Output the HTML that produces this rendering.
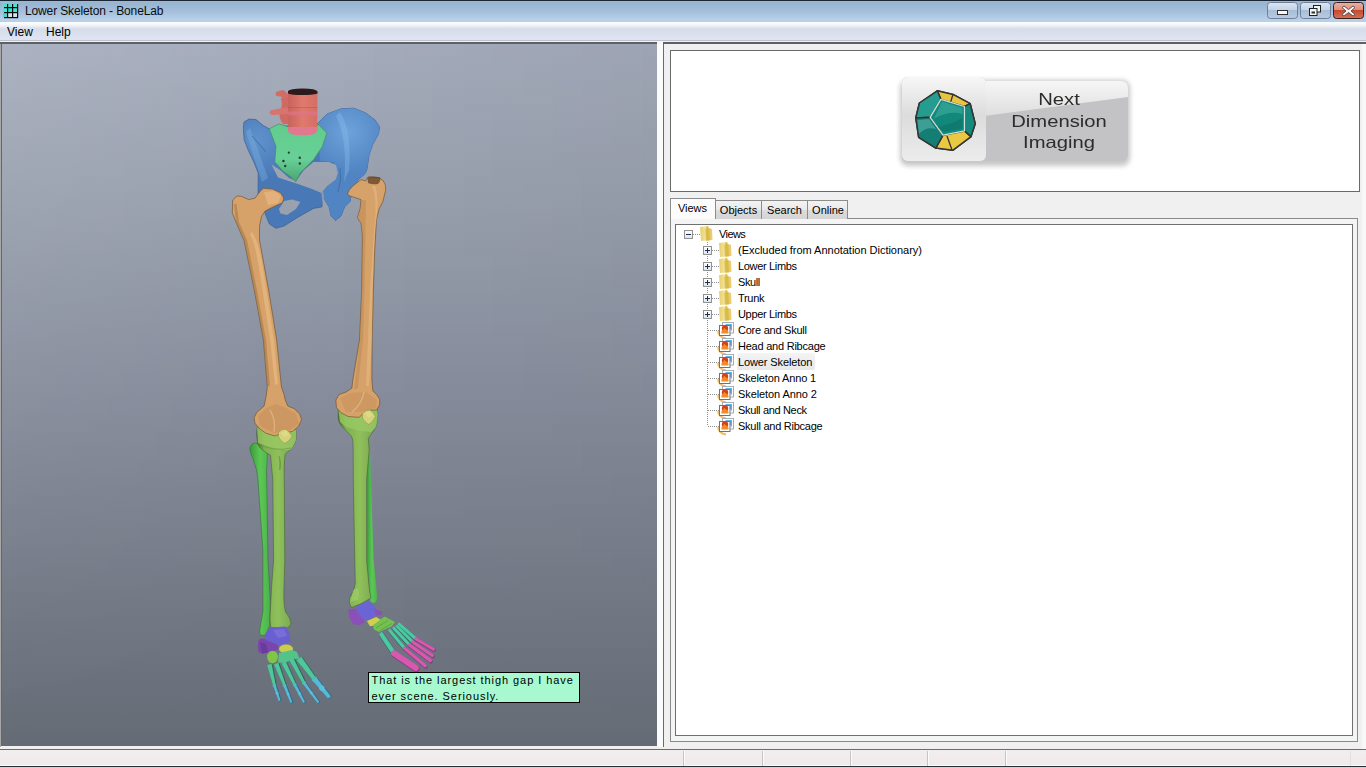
<!DOCTYPE html>
<html><head><meta charset="utf-8">
<style>
*{margin:0;padding:0;box-sizing:border-box}
html,body{width:1366px;height:768px;overflow:hidden;background:#f0f0f0;font-family:"Liberation Sans",sans-serif;font-size:12px;color:#000;position:relative}
.abs{position:absolute}
#title{left:0;top:0;width:1366px;height:22px;background:linear-gradient(#1a2535 0,#1a2535 1px,#a3b8cf 1px,#97b4d1 3px,#a6c0dc 12px,#b8d1ec 20px,#bccfe2 21px,#bccfe2 22px)}
#title .t{left:25px;top:4px;font-size:12px;line-height:14px;letter-spacing:-0.13px;color:#0c0c0c;white-space:nowrap}
#menu{left:0;top:22px;width:1366px;height:22px;background:linear-gradient(#fcfffe 0,#f3f5f8 3px,#d6dcea 7px,#dfe4f4 17px,#dfe4f4 18px,#c0c2c8 18px,#c0c2c8 19px,#f2f2f2 19px,#f2f2f2 20px,#5c6068 20px,#5c6068 22px)}
#menu span{position:absolute;top:3px;font-size:12px;color:#000}
#view3d{left:1px;top:44px;width:656px;height:702px;background:linear-gradient(#a5acbc 0%,#98a0ae 22.2%,#868c9b 50.7%,#676e78 96.3%,#646b75 100%)}
#view3dh{left:1px;top:44px;width:656px;height:702px;background:linear-gradient(to right,rgba(255,255,255,.078),rgba(255,255,255,0) 50%,rgba(0,0,0,0) 50%,rgba(0,0,0,.042));-webkit-mask-image:linear-gradient(#000,transparent);mask-image:linear-gradient(#000,transparent)}
#split{left:657px;top:44px;width:6px;height:703px;background:#fbfbfb}
#splitline{left:663px;top:44px;width:1px;height:703px;background:#6a6a6a}
#leftedge{left:0;top:44px;width:1px;height:703px;background:#a8a8a8}
#logo{left:670px;top:50px;width:690px;height:142px;background:#fff;border:1px solid #6a6a6a}
#tabpane{left:670px;top:218px;width:688px;height:524px;border:1px solid #8a8a8a;background:#f4f4f4}
#tree{left:675px;top:224px;width:678px;height:512px;border:1px solid #707070;background:#fff}
.tab{position:absolute;height:19px;border:1px solid #8c8c8c;border-bottom:none;background:linear-gradient(#f3f3f3,#e9e9e9 50%,#dcdcdc 51%,#d4d4d4);font-size:11px;line-height:13px;padding-top:3px;text-align:center}
.tab.sel{background:#fcfcfc;height:21px}
#status{left:0;top:749px;width:1366px;height:19px;background:linear-gradient(#6c6c6c 0,#6c6c6c 1px,#f2eeed 1px,#f0ebea 16px,#fafafa 16px,#fafafa 17px,#2a2f38 17px,#2a2f38 18px,#c5d3e3 18px)}
#status .sep{position:absolute;top:2px;width:1px;height:15px;background:#c8c4c2}
.node{position:absolute;font-size:11px;line-height:13px;letter-spacing:-0.2px;margin-top:1px;white-space:nowrap;color:#000}
</style></head><body>
<div id="title" class="abs"><span class="abs t">Lower Skeleton - BoneLab</span>
<svg class="abs" style="left:0;top:0" width="24" height="22" viewBox="0 0 24 22">
 <rect x="2" y="2" width="16" height="16" fill="#7fe0dc" opacity="0.35"/>
 <rect x="3" y="3" width="14" height="4" fill="#58dccf"/>
 <rect x="3" y="8" width="14" height="4" fill="#3ee6d6"/>
 <rect x="8" y="8" width="4" height="4" fill="#24e4d4"/>
 <rect x="3" y="13" width="4" height="4" fill="#50d8c4"/>
 <rect x="8" y="13" width="9" height="4" fill="#d8e4ea"/>
 <g fill="#080a0c"><rect x="7" y="4" width="1.2" height="14"/><rect x="12" y="4" width="1.2" height="14"/><rect x="17" y="4" width="1.2" height="14"/><rect x="4" y="7" width="14" height="1.2"/><rect x="4" y="12" width="14" height="1.2"/><rect x="4" y="17" width="14" height="1.2"/></g>
</svg>
<svg class="abs" style="left:1260px;top:0" width="106" height="22" viewBox="1260 0 106 22">
 <defs>
  <linearGradient id="wb" x1="0" y1="0" x2="0" y2="1"><stop offset="0" stop-color="#dbe6f2"/><stop offset="0.45" stop-color="#c4d5e8"/><stop offset="0.5" stop-color="#a9bdd6"/><stop offset="1" stop-color="#b7cbe2"/></linearGradient>
  <linearGradient id="wc" x1="0" y1="0" x2="0" y2="1"><stop offset="0" stop-color="#eab0a4"/><stop offset="0.45" stop-color="#e0907c"/><stop offset="0.5" stop-color="#c84a2c"/><stop offset="1" stop-color="#d67058"/></linearGradient>
 </defs>
 <rect x="1267.5" y="2.5" width="30" height="16" rx="3" fill="url(#wb)" stroke="#6f819a"/>
 <rect x="1300.5" y="2.5" width="30" height="16" rx="3" fill="url(#wb)" stroke="#6f819a"/>
 <rect x="1333.5" y="2.5" width="30" height="16" rx="3" fill="url(#wc)" stroke="#3a2020"/>
 <rect x="1277.5" y="10.5" width="10" height="4" fill="#f8f8f8" stroke="#303030"/>
 <rect x="1313.5" y="5.5" width="7" height="6.5" fill="#f4f4f4" stroke="#202020"/>
 <rect x="1309.5" y="8.5" width="7.5" height="7" fill="#f4f4f4" stroke="#202020"/>
 <rect x="1311.5" y="11.5" width="3.5" height="2" fill="#303030"/>
 <path d="M1344 6 L1348.5 9.5 L1353 6 L1355 7.5 L1351 11 L1355 14.5 L1353 16 L1348.5 12.5 L1344 16 L1342 14.5 L1346 11 L1342 7.5 Z" fill="#f4f4f4" stroke="#3a3a3a" stroke-width="0.8"/>
</svg>
</div>
<div id="menu" class="abs"><span style="left:7px">View</span><span style="left:46px">Help</span></div>
<div id="leftedge" class="abs"></div>
<div id="view3d" class="abs"></div><div id="view3dh" class="abs"></div><div class="abs" style="left:1px;top:44px;width:1px;height:702px;background:#62666e"></div><div class="abs" style="left:657px;top:41px;width:6px;height:3px;background:#f6f6f6"></div>
<!--SKEL--><svg class="abs" style="left:0;top:0" width="660" height="748" viewBox="0 0 660 748">
<defs>
 <linearGradient id="bg3d" gradientUnits="userSpaceOnUse" x1="0" y1="44" x2="0" y2="746"><stop offset="0" stop-color="#a7aebe"/><stop offset="0.222" stop-color="#9aa2b0"/><stop offset="0.507" stop-color="#878d9c"/><stop offset="0.963" stop-color="#676e78"/><stop offset="1" stop-color="#646b75"/></linearGradient>
 <linearGradient id="tibG" x1="0" y1="0" x2="1" y2="0"><stop offset="0" stop-color="#466e2a"/><stop offset="0.2" stop-color="#80b050"/><stop offset="0.55" stop-color="#8fc05a"/><stop offset="1" stop-color="#76a052"/></linearGradient>
 <linearGradient id="fibG" x1="0" y1="0" x2="1" y2="0"><stop offset="0" stop-color="#3a9a3a"/><stop offset="0.5" stop-color="#5cc856"/><stop offset="1" stop-color="#4cb24c"/></linearGradient>
 <linearGradient id="vertG" x1="0" y1="0" x2="1" y2="0"><stop offset="0" stop-color="#c8625c"/><stop offset="0.5" stop-color="#e07a6e"/><stop offset="1" stop-color="#d46e66"/></linearGradient>
 <linearGradient id="femG" x1="0" y1="0" x2="1" y2="0"><stop offset="0" stop-color="#8a6438"/><stop offset="0.25" stop-color="#c8955c"/><stop offset="0.6" stop-color="#e2ae72"/><stop offset="1" stop-color="#d09a60"/></linearGradient>
 <radialGradient id="blueL" gradientUnits="userSpaceOnUse" cx="258" cy="140" r="40"><stop offset="0" stop-color="#5f92cc"/><stop offset="1" stop-color="#4878b6"/></radialGradient>
 <radialGradient id="blueR" gradientUnits="userSpaceOnUse" cx="348" cy="132" r="42"><stop offset="0" stop-color="#6ea2da"/><stop offset="1" stop-color="#5084c2"/></radialGradient>
 <linearGradient id="sacG" x1="0" y1="0" x2="0" y2="1"><stop offset="0" stop-color="#62cc8c"/><stop offset="0.6" stop-color="#68d096"/><stop offset="1" stop-color="#4aa474"/></linearGradient>
</defs>
<!-- PELVIS blue base -->
<path d="M244 122 L249 119.1 L256 119.6 L263.3 125.5 L269.5 129 L287 126 L317.6 123.4 L327 114 L341 108.8 L353.9 108.2 L365.6 112.9 L375 119.9 L379.7 127 L378.5 134 L372.7 144.5 L369.1 155.1 L366.8 170.3 L364.7 174.1 L359.2 178.7 L352 188 L350.1 201.4 L344.6 206.9 L341 216 L335.5 220.6 L331 216 L329.1 206.9 L324.6 199.6 L323.5 197 L321.8 206.9 L313.5 208.4 L298 217.2 L284 226 L276 228.3 L269.3 223.9 L264.8 212.8 L258 200 L258.2 173 L254.2 162.8 L247.8 149.2 L244.2 140 L243.3 128.2 Z" fill="url(#blueL)" stroke="#3a5f90" stroke-width="0.7"/>
<path d="M317.6 123.4 L327 114 L341 108.8 L353.9 108.2 L365.6 112.9 L375 119.9 L379.7 127 L378.5 134 L372.7 144.5 L369.1 155.1 L366.8 170.3 L364.7 174.1 L359.2 178.7 L352 188 L350.1 201.4 L344.6 206.9 L341 216 L335.5 220.6 L331 216 L329.1 206.9 L324.6 199.6 L323.7 196 L324.6 186 L328.2 183.2 L333.7 176.8 L337.3 170.5 L333.5 162 L320 161 Z" fill="url(#blueR)"/>
<path d="M340 112 Q352 130 349 170 L344 182 Q348 140 336 116 Z" fill="#8cc0f0" opacity="0.35"/>
<path d="M250 128 Q258 150 268 178 L262 182 Q252 152 246 132 Z" fill="#8cbcec" opacity="0.3"/><path d="M252 136 Q260 145 266 152" fill="none" stroke="#34598a" stroke-width="1" opacity="0.6"/><path d="M340 168 Q342 180 338 192" fill="none" stroke="#34598a" stroke-width="1" opacity="0.5"/>
<!-- pelvic inlet hole -->
<path d="M271.5 164.5 L278 177.4 L298 184 L312 189 L321.5 192.9 L326.8 186.2 L335.7 179.6 L337.9 173 L336 165 L329.2 162 L313.5 161.9 L304 170 L296 181 L289 178 L280 170 Z" fill="url(#bg3d)"/>
<!-- obturator foramen left -->
<path d="M279 209 L284 201 L292 199.5 L300.3 202 L296 209 L287 215 L280.5 213.5 Z" fill="url(#bg3d)"/>
<!-- symphysis gap -->
<path d="M321.3 192.5 L323.5 191 L324.6 204 L329 212.8 L328 214 L322.5 204 Z" fill="url(#bg3d)" opacity="0.75"/>
<!-- SACRUM -->
<path d="M269.3 128.7 L278.8 124 L287 126.4 L314 132 L318 124 L326.8 133 L322.4 146.4 L313.5 159.7 L300.3 173 L295.8 181.8 L291.4 177.4 L282.5 170.7 L274.8 161.9 L276 146.4 Z" fill="url(#sacG)" stroke="#3a8a5c" stroke-width="0.6"/>
<g fill="#24402e"><circle cx="288.8" cy="152.7" r="1.1"/><circle cx="283.4" cy="161" r="1.3"/><circle cx="285.2" cy="166" r="1.2"/><circle cx="299.8" cy="157.8" r="1.2"/><circle cx="299.8" cy="163.5" r="1.2"/></g>
<!-- VERTEBRA -->
<path d="M275.5 92.5 Q279 90 283.5 90 L288.5 94.5 L288.5 100 L284 100.5 L281 96.5 L276 96 Z" fill="#d46c66"/>
<path d="M281 98 L288.5 98 L288.5 124 L283 124 Q280 120 279.5 116 Q281 110 282 104 Z" fill="#d06864"/>
<path d="M270.5 110.5 L284 107.5 L288.5 108 L288.5 114 L282 114.5 L272 115 Q269.5 114 269.5 112.5 Z" fill="#d87470"/>
<path d="M288 92 Q288 89 302.5 89 Q317.5 89 317.5 92 L317.2 130 Q316.5 135 302.5 135 Q288.5 135 288.2 130 Z" fill="url(#vertG)"/>
<path d="M288.2 111.5 L317.3 111.5 L317.3 115.4 L288.2 115.4 Z" fill="#de7488" opacity="0.7"/>
<path d="M288.2 107.5 L317.3 107.5" stroke="#a84848" stroke-width="0.6" opacity="0.6"/>
<path d="M288.2 127 L317.2 127 L317.2 131 Q316.5 135.2 302.5 135.2 Q288.5 135.2 288.2 131 Z" fill="#e07890"/>
<path d="M288 91 Q290 88.5 302.5 88.5 Q316 88.5 317.5 91.5 L317.5 93.5 Q312 95 302.5 95 Q292 95 288 93.5 Z" fill="#2e1a1a"/>
<!-- LEFT LEG -->
<path d="M250 447.5 Q251.5 443 255 443 Q259.5 443.5 262.4 447.3 L267.3 453.5 Q267.5 462 266.5 470 L268 560 L270.3 600.4 L269.8 625.4 Q267 633 264.6 635.8 L260 634.8 Q259.5 630 260.4 626.5 L263 610.8 L262.9 550 L258 480 Q257.5 470 253 459 Q249.5 451 250 447.5 Z" fill="url(#fibG)" stroke="#2a6a2a" stroke-width="0.5"/>
<path d="M257 428 L268 429 L280 429 L288 428 L294 427 Q297 431 296 434.2 Q296.5 440 295.1 442.4 Q293 447 290.6 449.7 Q287 452 285.1 454.3 L284.2 465 L284.8 560 L283.9 590 Q283.5 605 285.5 612 Q290 617 291 623 Q290.5 627.5 286 628 L270.8 627.5 Q269.5 620 270.3 612 L271.4 590 L273.6 560 L272.8 479 L271.4 465 L270.5 455.2 Q266 453 263.2 450.6 Q259 447.5 257.8 444.2 Q256 436 257 428 Z" fill="url(#tibG)" stroke="#3a5a28" stroke-width="0.5"/>
<path d="M257 428 L268 429 L280 429 L288 428 L294 427 Q297 431 296 434.2 Q296.5 440 295.1 442.4 Q293 447 290.6 449.7 L285 450 L270 447 L258 443 Z" fill="#98c864" opacity="0.8"/>
<path d="M258 444 Q274 452 291 448" fill="none" stroke="#5a8a3a" stroke-width="0.8" opacity="0.6"/>
<path d="M279.5 456 Q282 462 280.5 470 L279 470 Q280 462 278.5 456 Z" fill="#5a8a38" opacity="0.6"/><path d="M364 447 Q366 451 364.5 455 L363 455 Q364 451 362.5 447 Z" fill="#5a8a38" opacity="0.6"/>
<!-- RIGHT LEG -->
<path d="M368.3 438.3 L370.1 450 L370.5 470 L373.6 560 L377.3 597 Q377 602 374 603 L370 602 L367.3 560 L366.6 470 L367 440 Z" fill="url(#fibG)"/>
<path d="M338.2 409 L348.2 411 L359 411 L365 410 L376.5 408 Q378.5 414 377.4 419.2 Q377 424 375.6 427.4 Q373 432 371 434.7 L368.3 438.3 L369.2 450 L366.6 480 L366.6 560 L368.8 583.8 Q369.5 592 371 598 Q362 604 351.5 607.5 Q348.5 604 349.5 598 Q354 592 355.3 583.8 L354.8 560 L353.3 480 L353.2 450 L352.8 440.2 Q352 437 351 435.6 Q348 433 345.5 430.1 Q341 426 340 423.8 Q338 420 338.2 416.5 Z" fill="url(#tibG)" stroke="#3a5a28" stroke-width="0.5"/>
<path d="M338.2 409 L348.2 411 L359 411 L365 410 L376.5 408 Q378.5 414 377.4 419.2 Q377 424 375.6 427.4 L371 432 L360 431 L346 427 L340 422 Z" fill="#98c864" opacity="0.8"/>
<path d="M353 590 Q352 598 350 602 L358 600 Q360 594 358 588 Z" fill="#a8d470" opacity="0.5"/>
<!-- FEMURS -->
<path d="M232.7 200 L236.9 196 L241.4 196.4 L248.7 199.6 L255 198.2 L259.6 191.9 L263.3 188.2 L272.4 189.1 L280.6 192.8 L283.8 198.2 L282.4 202.8 L272.4 207.3 L265.1 211 L261.5 216.5 L259.6 225.6 L259.5 240 L268.6 290 L276.7 340 L281.4 387 L284.2 395 L285.1 399.6 L287.8 406 L294.2 408.7 L299.7 414.1 L301.5 419.6 L298.8 426 L292.4 431.5 L281.5 433.3 L275.1 436 L266 433.3 L259.6 428.7 L255 423.3 L254.1 417.8 L256.9 412.3 L264.1 406 L266.4 395 L267.3 386.9 L263.4 340 L254.3 290 L243.9 240 L241.4 234.7 L236 222 L232.3 212.8 Z" fill="#d6a26a" stroke="#6a4a28" stroke-width="0.6"/>
<path d="M234 204 L236 222 L244 240 L254.5 290 L263.5 340 L267.5 386 L270 386 L266 340 L257 290 L247 240 L239 222 L236.5 204 Z" fill="#9a6c3c" opacity="0.45"/><path d="M252 232 Q258 240 262 262 L268 300 L274 340 L278 384 L275 385 L270 340 L264 300 L258 262 Q255 244 250 234 Z" fill="#f0c48e" opacity="0.5"/>
<path d="M264 192 L274 191 L281 196 L278 203 L268 205 Z" fill="#eec08a" opacity="0.55"/>
<path d="M258 416 L266 408 L276 404 L286 408 L296 414 L299 424 L290 430 L274 433 L260 426 Z" fill="#c08a54" opacity="0.45"/><path d="M270 410 Q276 420 274 432" fill="none" stroke="#f0c490" stroke-width="1.5" opacity="0.5"/>
<path d="M347.4 194.2 Q349 189 352.8 186 L361 179.6 L365.6 181 L368.3 176.8 L379.2 177.8 Q383.5 180 384.7 183.2 Q386 186 385.6 190.5 L382.9 201.4 L379.2 208.7 L376.5 219.7 L375.6 235 L374.7 250 L373.4 290 L372.1 340 L371.9 380 L372.8 390.9 L376.5 394.6 L379.7 399.1 L379.7 404.6 L376.5 410.1 L370.1 410.1 L363.7 412.8 L359.2 417.4 L348.2 416.5 L340.9 412.8 L336.4 407.3 L335.9 400 L339.1 394.6 L346.4 391.9 L351.9 388.2 L352.8 380 L359.5 340 L361.7 290 L362.4 240 L362.4 235 L361 223.3 L357.4 217.8 L360.1 208.7 L361 199.6 L350.1 196 Z" fill="#d6a26a" stroke="#6a4a28" stroke-width="0.6"/>
<path d="M361.5 200 L366 200 L365.5 230 L364.5 290 L363 340 L358 388 L354 390 L360 340 L361.5 290 L362.4 240 L361 223 L358 218 L360.5 209 Z" fill="#b07e4a" opacity="0.35"/><path d="M372 186 Q378 200 374 230 L370 290 L368 340 L366 386 L369 386 L372 340 L372.5 290 L375 230 Q380 200 375 186 Z" fill="#eec08c" opacity="0.45"/>
<path d="M340 398 L350 393 L366 392 L377 400 L376 408 L362 412 L346 412 Z" fill="#c08a54" opacity="0.4"/><path d="M364 392 Q362 404 352 412" fill="none" stroke="#f0c490" stroke-width="1.5" opacity="0.55"/>
<path d="M367.4 177.5 Q372 175.5 380.2 177.5 Q381 181 378 184 Q372 185 368 183 Z" fill="#5a3a20" opacity="0.7"/>

<path d="M278.5 432.4 Q282 428.5 286 429.2 Q290 432 292.2 436.1 Q290 441 284.8 443.6 Q280 441 278.5 436.5 Z" fill="#d4d27a" stroke="#8a8a40" stroke-width="0.5"/>
<path d="M281 433 Q284 430.5 286.5 431 L289 435 L284 437 Z" fill="#e4e090" opacity="0.6"/>
<path d="M362.5 413.5 Q366 409.5 370 410 Q374 412.5 375.5 416.5 Q373.5 421.5 368.8 424.5 Q364 422 362.5 418 Z" fill="#d4d27a" stroke="#8a8a40" stroke-width="0.5"/>
<path d="M365 413 Q368 411 370.5 411.5 L373 415.5 L368 417.5 Z" fill="#e4e090" opacity="0.6"/>
<!-- LEFT FOOT -->
<path d="M258.5 640 Q262 637.5 266 639.5 L277.5 644.5 Q279.5 648 277.5 650 L267 653 Q261 655 258.5 652 Q257 646 258.5 640 Z" fill="#7a46ac"/>
<path d="M260 642 L266 644 L268 652 L262 653.5 Z" fill="#5e3490" opacity="0.6"/>
<path d="M269.8 627.5 L285.4 626.5 L289.6 633.75 L290.6 642 L280.2 645.2 L265.6 640 L264.6 634.8 Z" fill="#6a5fd0"/>
<path d="M273 630 L284 629 L287 636 L278 638 Z" fill="#8078e0" opacity="0.6"/>
<ellipse cx="286" cy="648.9" rx="7" ry="4.5" fill="#cccc4c"/>
<ellipse cx="272.5" cy="657" rx="5.4" ry="6.2" fill="#80c448"/>
<path d="M279 653 L292 650 L297 652 L299.5 658.5 L291.4 660 L284 663 L278 662.5 Z" fill="#52c48a"/>
<g stroke-linejoin="round">
<path d="M267.6 665.5 L273.6 686.4 L277.0 685.6 L272.8 664.3 Z" fill="#2a6a58"/>
<path d="M267.2 665.0 L273.2 685.9 L275.8 685.3 L271.6 664.0 Z" fill="#4ec89a"/>
<circle cx="274.5" cy="685.6" r="1.9" fill="#4ec0a0"/>
<path d="M274.5 665.0 L283.8 686.6 L287.0 685.4 L279.5 663.0 Z" fill="#2a6a58"/>
<path d="M274.1 664.4 L283.4 686.1 L285.8 685.1 L278.3 662.8 Z" fill="#4ec89a"/>
<circle cx="284.6" cy="685.6" r="1.9" fill="#4ec0a0"/>
<path d="M282.2 664.4 L294.1 686.0 L297.1 684.4 L287.0 662.0 Z" fill="#2a6a58"/>
<path d="M281.7 663.8 L293.6 685.4 L296.0 684.2 L285.9 661.8 Z" fill="#4ec89a"/>
<circle cx="294.8" cy="684.8" r="1.9" fill="#4ec0a0"/>
<path d="M289.7 661.1 L303.3 684.4 L306.5 682.6 L294.7 658.5 Z" fill="#2a6a58"/>
<path d="M289.3 660.5 L302.9 683.8 L305.3 682.4 L293.5 658.3 Z" fill="#4ec89a"/>
<circle cx="304.1" cy="683.1" r="2.0" fill="#4ec0a0"/>
<path d="M297.1 660.9 L313.2 680.7 L317.0 677.9 L302.5 656.9 Z" fill="#2a6a58"/>
<path d="M296.6 660.3 L312.7 680.1 L315.9 677.7 L301.4 656.7 Z" fill="#4ec89a"/>
<circle cx="314.3" cy="678.9" r="2.6" fill="#4ec0a0"/>
<path d="M273.6 686.6 L279.1 701.7 L281.7 700.9 L277.0 685.4 Z" fill="#2e6a88"/>
<path d="M273.2 686.0 L278.7 701.2 L280.5 700.6 L275.8 685.2 Z" fill="#58b8d8"/>
<circle cx="277.1" cy="693.2" r="1.4" fill="#5cc0dc"/>
<path d="M283.7 686.7 L290.9 703.5 L293.5 702.5 L287.1 685.3 Z" fill="#2e6a88"/>
<path d="M283.3 686.1 L290.5 703.0 L292.3 702.2 L285.9 685.1 Z" fill="#58b8d8"/>
<circle cx="288.0" cy="694.1" r="1.4" fill="#5cc0dc"/>
<path d="M294.0 686.0 L303.7 703.6 L306.1 702.4 L297.2 684.4 Z" fill="#2e6a88"/>
<path d="M293.6 685.4 L303.2 703.1 L305.0 702.1 L296.0 684.2 Z" fill="#58b8d8"/>
<circle cx="299.5" cy="693.7" r="1.4" fill="#5cc0dc"/>
<path d="M303.5 684.6 L318.2 703.8 L320.4 702.2 L306.3 682.4 Z" fill="#2e6a88"/>
<path d="M303.0 683.9 L317.7 703.2 L319.3 702.0 L305.2 682.3 Z" fill="#58b8d8"/>
<circle cx="311.3" cy="692.9" r="1.4" fill="#5cc0dc"/>
<path d="M312.8 681.2 L328.6 699.3 L332.0 696.5 L317.4 677.4 Z" fill="#2e6a88"/>
<path d="M312.3 680.5 L328.1 698.6 L330.9 696.4 L316.3 677.3 Z" fill="#58b8d8"/>
<circle cx="321.9" cy="688.2" r="2.6" fill="#5cc0dc"/>
</g>
<!-- RIGHT FOOT -->
<path d="M348.1 609.6 L356.5 608.5 L362.7 615.8 L364.8 622 L359.6 625.2 L353.3 624.2 L349.2 618 Z" fill="#8a50b8"/>
<path d="M356.5 606.5 L369 600.2 L375.2 607.5 L376.25 614.8 L369 620 L362.7 619 L357.5 612.7 Z" fill="#6a64d4"/>
<path d="M374.2 608.5 L382.5 611.7 L381.5 614.8 L376.25 615.8 Z" fill="#8a50b8"/>
<path d="M366.9 621 L376.25 616.9 L382.5 621 L380.4 624.2 L370 626.25 Z" fill="#d0d050"/>
<path d="M373 625.2 L384.6 616.5 L395 622 L391.9 626.25 L379 632 L374 629.4 Z" fill="#74c050"/><path d="M376 628 L388 620.5 M380 630.5 L392 623.5" stroke="#4a8a40" stroke-width="0.7" opacity="0.7"/>
<g stroke-linecap="round" fill="none">
 <g stroke="#2a6a5a" transform="translate(0.5 0.9)">
  <path d="M381.5 634.6 L394 653.3" stroke-width="5.2"/><path d="M389.8 630.4 L404.4 648.1" stroke-width="4"/><path d="M394 628.3 L409.6 645" stroke-width="4"/><path d="M397.1 626.25 L412.7 641.9" stroke-width="3.8"/><path d="M399.2 624.2 L415.8 638.75" stroke-width="3.8"/>
 </g>
 <g stroke="#4ec8a4">
  <path d="M381.5 634.6 L394 653.3" stroke-width="4.4"/><path d="M389.8 630.4 L404.4 648.1" stroke-width="3.2"/><path d="M394 628.3 L409.6 645" stroke-width="3.2"/><path d="M397.1 626.25 L412.7 641.9" stroke-width="3"/><path d="M399.2 624.2 L415.8 638.75" stroke-width="3"/>
 </g>
 <g stroke="#8a3a78" transform="translate(0.5 0.9)">
  <path d="M394 653.3 L415.8 668" stroke-width="6.6"/><path d="M404.4 648.1 L425.2 665.8" stroke-width="3.8"/><path d="M409.6 645 L430.4 660.6" stroke-width="3.8"/><path d="M412.7 641.9 L432.5 655.4" stroke-width="3.6"/><path d="M415.8 638.75 L433.5 649.2" stroke-width="3.6"/>
 </g>
 <g stroke="#d658b0">
  <path d="M394 653.3 L415.8 668" stroke-width="6"/><path d="M404.4 648.1 L425.2 665.8" stroke-width="3.2"/><path d="M409.6 645 L430.4 660.6" stroke-width="3.2"/><path d="M412.7 641.9 L432.5 655.4" stroke-width="3"/><path d="M415.8 638.75 L433.5 649.2" stroke-width="3"/>
 </g>
</g>
</svg><!--/SKEL-->
<div class="abs" style="left:368px;top:672px;width:212px;height:31px;background:#a8f8d0;border:1px solid #000;font-size:11px;line-height:16px;letter-spacing:0.93px;padding:0;color:#000;white-space:nowrap"><div style="position:absolute;left:2.5px;top:-1px">That is the largest thigh gap I have<br>ever scene. Seriously.</div></div>
<div id="split" class="abs"></div>
<div id="splitline" class="abs"></div>
<div id="logo" class="abs"></div>
<svg class="abs" style="left:890px;top:66px" width="250" height="110" viewBox="890 66 250 110">
 <defs>
  <linearGradient id="lgL" x1="0" y1="0" x2="0" y2="1"><stop offset="0" stop-color="#f7f7f7"/><stop offset="0.45" stop-color="#dcdcdc"/><stop offset="1" stop-color="#ececec"/></linearGradient>
  <linearGradient id="lgR" x1="0" y1="0" x2="0" y2="1"><stop offset="0" stop-color="#f6f6f6"/><stop offset="1" stop-color="#dedede"/></linearGradient>
  <filter id="shd" x="-20%" y="-20%" width="140%" height="150%"><feGaussianBlur stdDeviation="2.5"/></filter>
 </defs>
 <rect x="900" y="80" width="230" height="86" rx="8" fill="#000" opacity="0.22" filter="url(#shd)"/>
 <path d="M984 81 H1121 Q1128 81 1128 88 V154 Q1128 161 1121 161 H984 Z" fill="#c3c3c5"/>
 <path d="M984 81 H1121 Q1128 81 1128 88 V97 L984 116 Z" fill="url(#lgR)"/>
 <rect x="902" y="77" width="84" height="86" rx="6" fill="#c9c9c9"/>
 <rect x="902" y="77" width="84" height="84" rx="6" fill="url(#lgL)"/>
 <g stroke="#333535" stroke-width="1.5" stroke-linejoin="round">
  <polygon points="937.3,90.8 953,94.4 970.2,103.7 975.2,123.7 971,136.6 953,150.2 935.8,148.1 918.7,137.3 915.8,118 919.4,103" fill="#1a8a80"/>
  <polygon points="937.3,90.8 953,94.4 970.2,103.7 964.5,106.5 940.9,99.4" fill="#e8c440"/>
  <polygon points="943,135.2 964.5,130.9 971,136.6 953,150.2 935.8,148.1" fill="#eac842"/>
  <polygon points="919.4,103 937.3,90.8 940.9,99.4 930.1,117.3 915.8,118" fill="#259c90"/>
  <polygon points="915.8,118 930.1,117.3 943,135.2 935.8,148.1 918.7,137.3" fill="#157e74"/>
  <polygon points="964.5,106.5 970.2,103.7 975.2,123.7 971,136.6 964.5,130.9" fill="#148a7e"/>
 </g>
 <path d="M917.5 120 L929 119 L936 129 Q926 126 919 134 Z" fill="#5cb8b0" opacity="0.55"/>
 <line x1="953" y1="94.4" x2="950.5" y2="102.5" stroke="#333535" stroke-width="1.3"/>
 <line x1="947" y1="136" x2="952" y2="150" stroke="#333535" stroke-width="1.3"/>
 <polygon points="940.9,99.4 964.5,106.5 964.5,130.9 943,135.2 930.1,117.3" fill="#12887b" stroke="#cfe0dc" stroke-width="1.3" stroke-linejoin="round"/>
 <path d="M942 101.5 L962.5 108 L962.5 114 Q950 110 934 118.5 Z" fill="#3aa89c" opacity="0.7"/>
 <path d="M944 132 L962 128.5 L962.5 118 Q952 124 938 127 Z" fill="#0b6e64" opacity="0.5"/>
</svg>
<div class="abs" style="left:959px;top:89px;width:200px;text-align:center;font-size:16.5px;line-height:21.7px;color:#2c2c2c;transform:scaleX(1.225);transform-origin:100px 0">Next<br>Dimension<br>Imaging</div>
<div id="tabpane" class="abs"></div>
<div class="tab sel" style="left:670px;top:198px;width:46px;padding-top:3px;z-index:2;text-indent:-1px">Views</div>
<div class="tab" style="left:715px;top:200px;width:47px">Objects</div>
<div class="tab" style="left:761px;top:200px;width:47px">Search</div>
<div class="tab" style="left:807px;top:200px;width:41px;text-indent:1px">Online</div>
<div id="tree" class="abs"></div>
<!--TREE--><div class="abs" style="left:737px;top:353px;width:78px;height:17px;background:linear-gradient(#f4f4f4,#e8e8e8);border-radius:2px"></div>
<div class="node" style="left:719px;top:227px;letter-spacing:-0.6px">Views</div>
<div class="node" style="left:738px;top:243px;letter-spacing:-0.02px">(Excluded from Annotation Dictionary)</div>
<div class="node" style="left:738px;top:259px;letter-spacing:-0.33px">Lower Limbs</div>
<div class="node" style="left:738px;top:275px;letter-spacing:-0.4px">Skull</div>
<div class="node" style="left:738px;top:291px;letter-spacing:-0.32px">Trunk</div>
<div class="node" style="left:738px;top:307px;letter-spacing:-0.33px">Upper Limbs</div>
<div class="node" style="left:738px;top:323px;letter-spacing:-0.25px">Core and Skull</div>
<div class="node" style="left:738px;top:339px;letter-spacing:-0.23px">Head and Ribcage</div>
<div class="node" style="left:738px;top:355px;letter-spacing:-0.12px">Lower Skeleton</div>
<div class="node" style="left:738px;top:371px;letter-spacing:-0.14px">Skeleton Anno 1</div>
<div class="node" style="left:738px;top:387px;letter-spacing:-0.09px">Skeleton Anno 2</div>
<div class="node" style="left:738px;top:403px;letter-spacing:-0.33px">Skull and Neck</div>
<div class="node" style="left:738px;top:419px;letter-spacing:-0.25px">Skull and Ribcage</div>
<svg class="abs" style="left:676px;top:225px" width="300" height="220" viewBox="676 225 300 220"><defs><linearGradient id="fold" x1="0" y1="0" x2="1" y2="0"><stop offset="0" stop-color="#e7cf6c"/><stop offset="0.45" stop-color="#f3e39a"/><stop offset="0.55" stop-color="#dcbc4c"/><stop offset="1" stop-color="#ecd27a"/></linearGradient><linearGradient id="pbox" x1="0" y1="0" x2="0" y2="1"><stop offset="0" stop-color="#ffffff"/><stop offset="1" stop-color="#dfe3ea"/></linearGradient></defs><line x1="707.5" y1="242" x2="707.5" y2="426" stroke="#8e8e8e" stroke-width="1" stroke-dasharray="1 1"/><line x1="693" y1="234.5" x2="700" y2="234.5" stroke="#8e8e8e" stroke-width="1" stroke-dasharray="1 1"/><rect x="684.5" y="230.5" width="8" height="8" fill="url(#pbox)" stroke="#919191"/><line x1="686" y1="234.5" x2="691" y2="234.5" stroke="#1e2c5a"/><path d="M700 227 L708 226 L709 228 L712 229 L712.5 240 L701 241 Z" fill="url(#fold)"/><path d="M705 229 L709 228 L710 240.5 L706 241 Z" fill="#d6b440" opacity="0.55"/><line x1="712" y1="250.5" x2="719" y2="250.5" stroke="#8e8e8e" stroke-width="1" stroke-dasharray="1 1"/><rect x="703.5" y="246.5" width="8" height="8" fill="url(#pbox)" stroke="#919191"/><line x1="705" y1="250.5" x2="710" y2="250.5" stroke="#1e2c5a"/><line x1="707.5" y1="248" x2="707.5" y2="253" stroke="#1e2c5a"/><path d="M719 243 L727 242 L728 244 L731 245 L731.5 256 L720 257 Z" fill="url(#fold)"/><path d="M724 245 L728 244 L729 256.5 L725 257 Z" fill="#d6b440" opacity="0.55"/><line x1="712" y1="266.5" x2="719" y2="266.5" stroke="#8e8e8e" stroke-width="1" stroke-dasharray="1 1"/><rect x="703.5" y="262.5" width="8" height="8" fill="url(#pbox)" stroke="#919191"/><line x1="705" y1="266.5" x2="710" y2="266.5" stroke="#1e2c5a"/><line x1="707.5" y1="264" x2="707.5" y2="269" stroke="#1e2c5a"/><path d="M719 259 L727 258 L728 260 L731 261 L731.5 272 L720 273 Z" fill="url(#fold)"/><path d="M724 261 L728 260 L729 272.5 L725 273 Z" fill="#d6b440" opacity="0.55"/><line x1="712" y1="282.5" x2="719" y2="282.5" stroke="#8e8e8e" stroke-width="1" stroke-dasharray="1 1"/><rect x="703.5" y="278.5" width="8" height="8" fill="url(#pbox)" stroke="#919191"/><line x1="705" y1="282.5" x2="710" y2="282.5" stroke="#1e2c5a"/><line x1="707.5" y1="280" x2="707.5" y2="285" stroke="#1e2c5a"/><path d="M719 275 L727 274 L728 276 L731 277 L731.5 288 L720 289 Z" fill="url(#fold)"/><path d="M724 277 L728 276 L729 288.5 L725 289 Z" fill="#d6b440" opacity="0.55"/><line x1="712" y1="298.5" x2="719" y2="298.5" stroke="#8e8e8e" stroke-width="1" stroke-dasharray="1 1"/><rect x="703.5" y="294.5" width="8" height="8" fill="url(#pbox)" stroke="#919191"/><line x1="705" y1="298.5" x2="710" y2="298.5" stroke="#1e2c5a"/><line x1="707.5" y1="296" x2="707.5" y2="301" stroke="#1e2c5a"/><path d="M719 291 L727 290 L728 292 L731 293 L731.5 304 L720 305 Z" fill="url(#fold)"/><path d="M724 293 L728 292 L729 304.5 L725 305 Z" fill="#d6b440" opacity="0.55"/><line x1="712" y1="314.5" x2="719" y2="314.5" stroke="#8e8e8e" stroke-width="1" stroke-dasharray="1 1"/><rect x="703.5" y="310.5" width="8" height="8" fill="url(#pbox)" stroke="#919191"/><line x1="705" y1="314.5" x2="710" y2="314.5" stroke="#1e2c5a"/><line x1="707.5" y1="312" x2="707.5" y2="317" stroke="#1e2c5a"/><path d="M719 307 L727 306 L728 308 L731 309 L731.5 320 L720 321 Z" fill="url(#fold)"/><path d="M724 309 L728 308 L729 320.5 L725 321 Z" fill="#d6b440" opacity="0.55"/><line x1="708" y1="330.5" x2="719" y2="330.5" stroke="#8e8e8e" stroke-width="1" stroke-dasharray="1 1"/><path d="M718.2 331 A7.5 7.5 0 0 0 726 338.3" fill="none" stroke="#f2b850" stroke-width="2.2" opacity="0.9"/><rect x="722.5" y="322.5" width="11" height="10.5" fill="#fff" stroke="#a4acb4"/><path d="M725 324 H732 V331 Z" fill="#62b4e8"/><rect x="719.5" y="325.5" width="10.5" height="10" fill="#fff" stroke="#6c747c"/><circle cx="725" cy="328.5" r="3.2" fill="#d8401c"/><path d="M721.5 331 L724.5 328 L728.5 331.5 L728.5 333.5 L721.5 333.5 Z" fill="#f08a28"/><line x1="708" y1="346.5" x2="719" y2="346.5" stroke="#8e8e8e" stroke-width="1" stroke-dasharray="1 1"/><path d="M718.2 347 A7.5 7.5 0 0 0 726 354.3" fill="none" stroke="#f2b850" stroke-width="2.2" opacity="0.9"/><rect x="722.5" y="338.5" width="11" height="10.5" fill="#fff" stroke="#a4acb4"/><path d="M725 340 H732 V347 Z" fill="#62b4e8"/><rect x="719.5" y="341.5" width="10.5" height="10" fill="#fff" stroke="#6c747c"/><circle cx="725" cy="344.5" r="3.2" fill="#d8401c"/><path d="M721.5 347 L724.5 344 L728.5 347.5 L728.5 349.5 L721.5 349.5 Z" fill="#f08a28"/><line x1="708" y1="362.5" x2="719" y2="362.5" stroke="#8e8e8e" stroke-width="1" stroke-dasharray="1 1"/><path d="M718.2 363 A7.5 7.5 0 0 0 726 370.3" fill="none" stroke="#f2b850" stroke-width="2.2" opacity="0.9"/><rect x="722.5" y="354.5" width="11" height="10.5" fill="#fff" stroke="#a4acb4"/><path d="M725 356 H732 V363 Z" fill="#62b4e8"/><rect x="719.5" y="357.5" width="10.5" height="10" fill="#fff" stroke="#6c747c"/><circle cx="725" cy="360.5" r="3.2" fill="#d8401c"/><path d="M721.5 363 L724.5 360 L728.5 363.5 L728.5 365.5 L721.5 365.5 Z" fill="#f08a28"/><line x1="708" y1="378.5" x2="719" y2="378.5" stroke="#8e8e8e" stroke-width="1" stroke-dasharray="1 1"/><path d="M718.2 379 A7.5 7.5 0 0 0 726 386.3" fill="none" stroke="#f2b850" stroke-width="2.2" opacity="0.9"/><rect x="722.5" y="370.5" width="11" height="10.5" fill="#fff" stroke="#a4acb4"/><path d="M725 372 H732 V379 Z" fill="#62b4e8"/><rect x="719.5" y="373.5" width="10.5" height="10" fill="#fff" stroke="#6c747c"/><circle cx="725" cy="376.5" r="3.2" fill="#d8401c"/><path d="M721.5 379 L724.5 376 L728.5 379.5 L728.5 381.5 L721.5 381.5 Z" fill="#f08a28"/><line x1="708" y1="394.5" x2="719" y2="394.5" stroke="#8e8e8e" stroke-width="1" stroke-dasharray="1 1"/><path d="M718.2 395 A7.5 7.5 0 0 0 726 402.3" fill="none" stroke="#f2b850" stroke-width="2.2" opacity="0.9"/><rect x="722.5" y="386.5" width="11" height="10.5" fill="#fff" stroke="#a4acb4"/><path d="M725 388 H732 V395 Z" fill="#62b4e8"/><rect x="719.5" y="389.5" width="10.5" height="10" fill="#fff" stroke="#6c747c"/><circle cx="725" cy="392.5" r="3.2" fill="#d8401c"/><path d="M721.5 395 L724.5 392 L728.5 395.5 L728.5 397.5 L721.5 397.5 Z" fill="#f08a28"/><line x1="708" y1="410.5" x2="719" y2="410.5" stroke="#8e8e8e" stroke-width="1" stroke-dasharray="1 1"/><path d="M718.2 411 A7.5 7.5 0 0 0 726 418.3" fill="none" stroke="#f2b850" stroke-width="2.2" opacity="0.9"/><rect x="722.5" y="402.5" width="11" height="10.5" fill="#fff" stroke="#a4acb4"/><path d="M725 404 H732 V411 Z" fill="#62b4e8"/><rect x="719.5" y="405.5" width="10.5" height="10" fill="#fff" stroke="#6c747c"/><circle cx="725" cy="408.5" r="3.2" fill="#d8401c"/><path d="M721.5 411 L724.5 408 L728.5 411.5 L728.5 413.5 L721.5 413.5 Z" fill="#f08a28"/><line x1="708" y1="426.5" x2="719" y2="426.5" stroke="#8e8e8e" stroke-width="1" stroke-dasharray="1 1"/><path d="M718.2 427 A7.5 7.5 0 0 0 726 434.3" fill="none" stroke="#f2b850" stroke-width="2.2" opacity="0.9"/><rect x="722.5" y="418.5" width="11" height="10.5" fill="#fff" stroke="#a4acb4"/><path d="M725 420 H732 V427 Z" fill="#62b4e8"/><rect x="719.5" y="421.5" width="10.5" height="10" fill="#fff" stroke="#6c747c"/><circle cx="725" cy="424.5" r="3.2" fill="#d8401c"/><path d="M721.5 427 L724.5 424 L728.5 427.5 L728.5 429.5 L721.5 429.5 Z" fill="#f08a28"/></svg><!--/TREE-->
<div class="abs" style="left:1362px;top:44px;width:4px;height:705px;background:#f8f8f8"></div><div id="status" class="abs"><div class="sep" style="left:683px"></div><div class="sep" style="left:684px;background:#fbfbfb"></div><div class="sep" style="left:762px"></div><div class="sep" style="left:763px;background:#fbfbfb"></div><div class="sep" style="left:850px"></div><div class="sep" style="left:851px;background:#fbfbfb"></div><div class="sep" style="left:927px"></div><div class="sep" style="left:928px;background:#fbfbfb"></div><div class="sep" style="left:1005px"></div><div class="sep" style="left:1006px;background:#fbfbfb"></div><div class="sep" style="left:1350px;background:#e4e0de"></div></div>
</body></html>
